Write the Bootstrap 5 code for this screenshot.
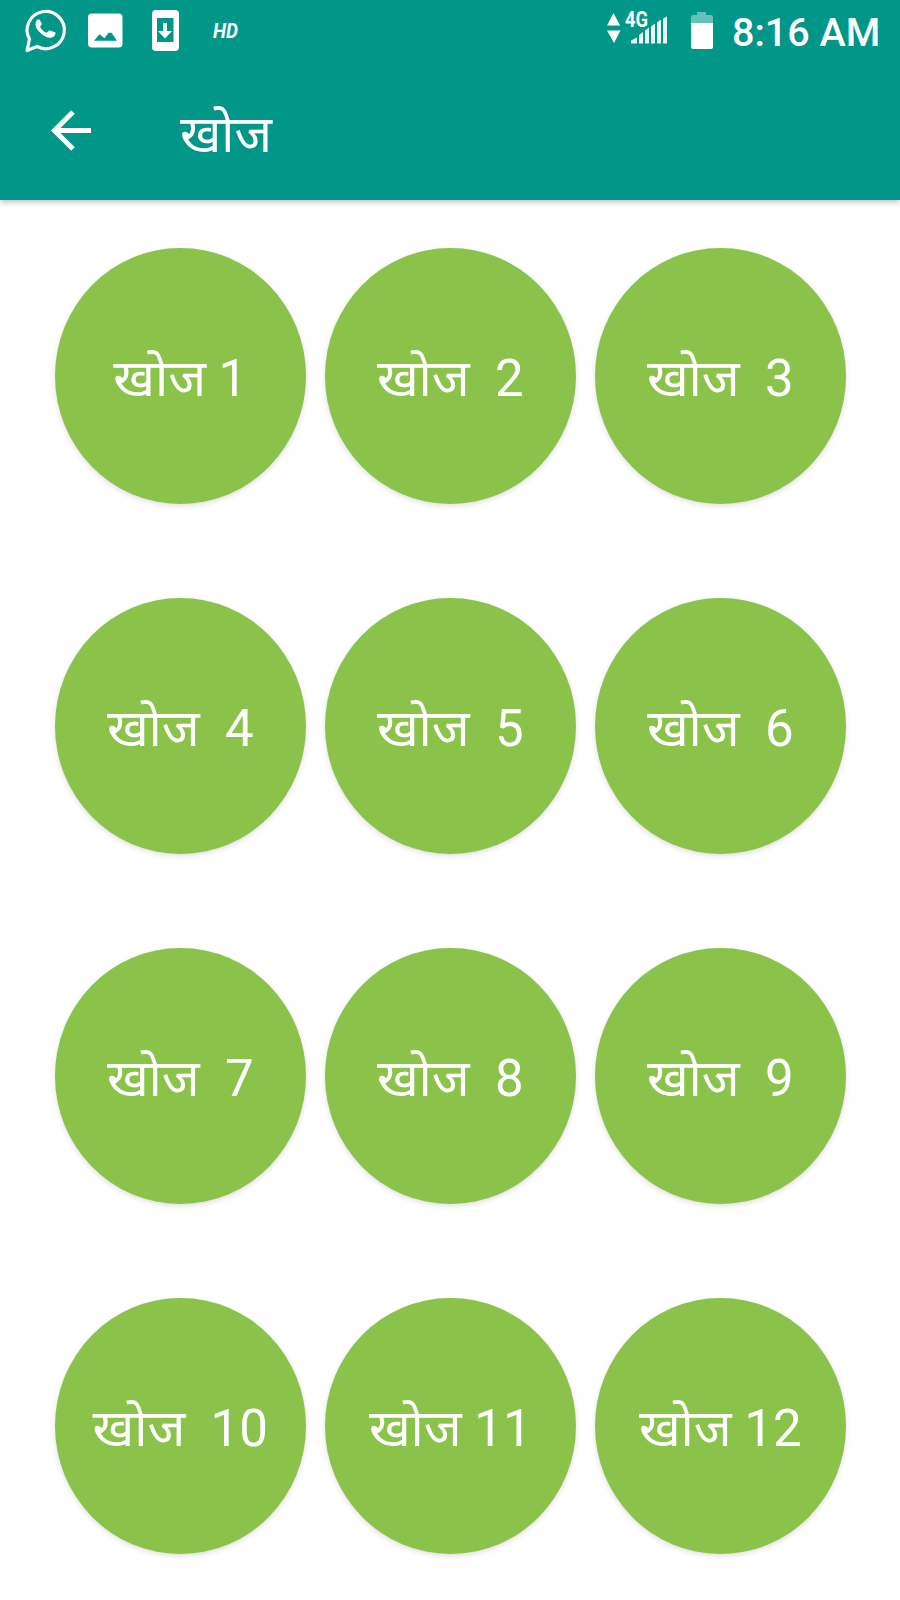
<!DOCTYPE html>
<html lang="hi">
<head>
<meta charset="utf-8">
<meta name="viewport" content="width=device-width, initial-scale=1">
<title>खोज</title>
<link href="https://cdn.jsdelivr.net/npm/bootstrap@5.3.0/dist/css/bootstrap.min.css" rel="stylesheet">
<style>
  body { font-family: Roboto, "Noto Sans", "Noto Sans Devanagari", sans-serif; height: 1600px; overflow: hidden; }
  .app-header { background: #009688; height: 200px; box-shadow: 0 2px 6px rgba(60,20,40,.3); }
  .status-bar { height: 60px; }
  .status-bar svg { height: 60px; display: block; }
  .clock { font-size: 39.500px; font-weight: 500; line-height: 60px; width: 168px; padding: 3px 20px 0 0; text-align: right; white-space: nowrap; }
  .toolbar { height: 140px; padding-left: 48px; }
  .back-btn svg { display: block; }
  .page-title { font-size: 50.500px; line-height: 60px; margin: 9px 0 0 88px; font-weight: 400; }
  .quest-grid { display: grid; grid-template-columns: repeat(3, 250.500px); column-gap: 19.500px; row-gap: 94px; padding: 47.500px 0 0 55px; }
  .quest { height: 256px; border-radius: 50%; background: #8bc34a; color: #fff; font-size: 51px; line-height: 60px; padding: 7px 0 0; border: 0; white-space: pre; box-shadow: 0 2px 5px rgba(40,30,70,.15); }
</style>
</head>
<body class="bg-white">
<header class="app-header text-white position-relative">
  <div class="status-bar d-flex justify-content-between">
    <svg width="260" viewBox="0 0 260 60" fill="#fff">
      <path d="M27 50.500l2.500-11.300A18.600 18.600 0 1 1 37 46.500z" fill="none" stroke="#fff" stroke-width="3.200" stroke-linejoin="round"/>
      <path d="M37.500 19.500c-3 3-2.500 8 1 11.500 4 4.500 8.500 7.500 13 6.500 3-.7 4-2.500 4-5l-6-2.200-3 2.400c-3-1.200-5-3.200-6.500-6l2-2.700-2.500-4.500z"/>
      <path fill-rule="evenodd" d="M92 13.500h26.500a4 4 0 0 1 4 4v26a4 4 0 0 1-4 4H92a4 4 0 0 1-4-4v-26a4 4 0 0 1 4-4zM94 40.800h23l-5.500-8h-3l-4 5.500-5-4z"/>
      <path fill-rule="evenodd" d="M156 10h19a4 4 0 0 1 4 4v33a4 4 0 0 1-4 4h-19a4 4 0 0 1-4-4V14a4 4 0 0 1 4-4zM157 18v24h16.500V18z"/>
      <path d="M163 23h4v8h5l-7 7.500-7-7.500h5z"/>
      <text x="213" y="38" font-family="Roboto" font-size="21" font-weight="700" font-style="italic" textLength="25" lengthAdjust="spacingAndGlyphs">HD</text>
    </svg>
    <div class="d-flex">
      <svg width="133" viewBox="599 0 133 60" fill="#fff">
        <path d="M607 25.500l6.500-12.500 6.500 12.500zM607 30.500h13.500l-6.500 12.500z"/>
        <text x="625" y="26.500" font-family="Roboto" font-size="22" font-weight="700" textLength="23" lengthAdjust="spacingAndGlyphs">4G</text>
        <path d="M631 43.500v-3l6-3v6zM639 43.500V35l4-3v11.500zM645 43.500v-13l4-3v16zM651 43.500V26.500l4-3v20zM657 43.500V22.500l4-3v24zM663 43.500V18.500l4-2v27z" opacity=".92"/>
        <path d="M691 23v-6q0-2 2-2h4v-3h9v3h5q2 0 2 2v6z" opacity=".4"/>
        <path d="M691 23h22v24q0 2-2 2h-18q-2 0-2-2z"/>
      </svg>
      <div class="clock">8:16 AM</div>
    </div>
  </div>
  <div class="toolbar d-flex align-items-center">
    <a href="#" class="back-btn" aria-label="Back">
      <svg width="44" height="44" viewBox="0 0 44 44" fill="none" stroke="#fff" stroke-width="5"><path d="M43 22.500H6M25 4L6.500 22.500 25 41"/></svg>
    </a>
    <h1 class="page-title">खोज</h1>
  </div>
</header>
<main class="quest-grid">
  <button class="quest">खोज 1</button>
  <button class="quest">खोज  2</button>
  <button class="quest">खोज  3</button>
  <button class="quest">खोज  4</button>
  <button class="quest">खोज  5</button>
  <button class="quest">खोज  6</button>
  <button class="quest">खोज  7</button>
  <button class="quest">खोज  8</button>
  <button class="quest">खोज  9</button>
  <button class="quest">खोज  10</button>
  <button class="quest">खोज 11</button>
  <button class="quest">खोज 12</button>
</main>
<script src="https://cdn.jsdelivr.net/npm/bootstrap@5.3.0/dist/js/bootstrap.bundle.min.js"></script>
</body>
</html>
